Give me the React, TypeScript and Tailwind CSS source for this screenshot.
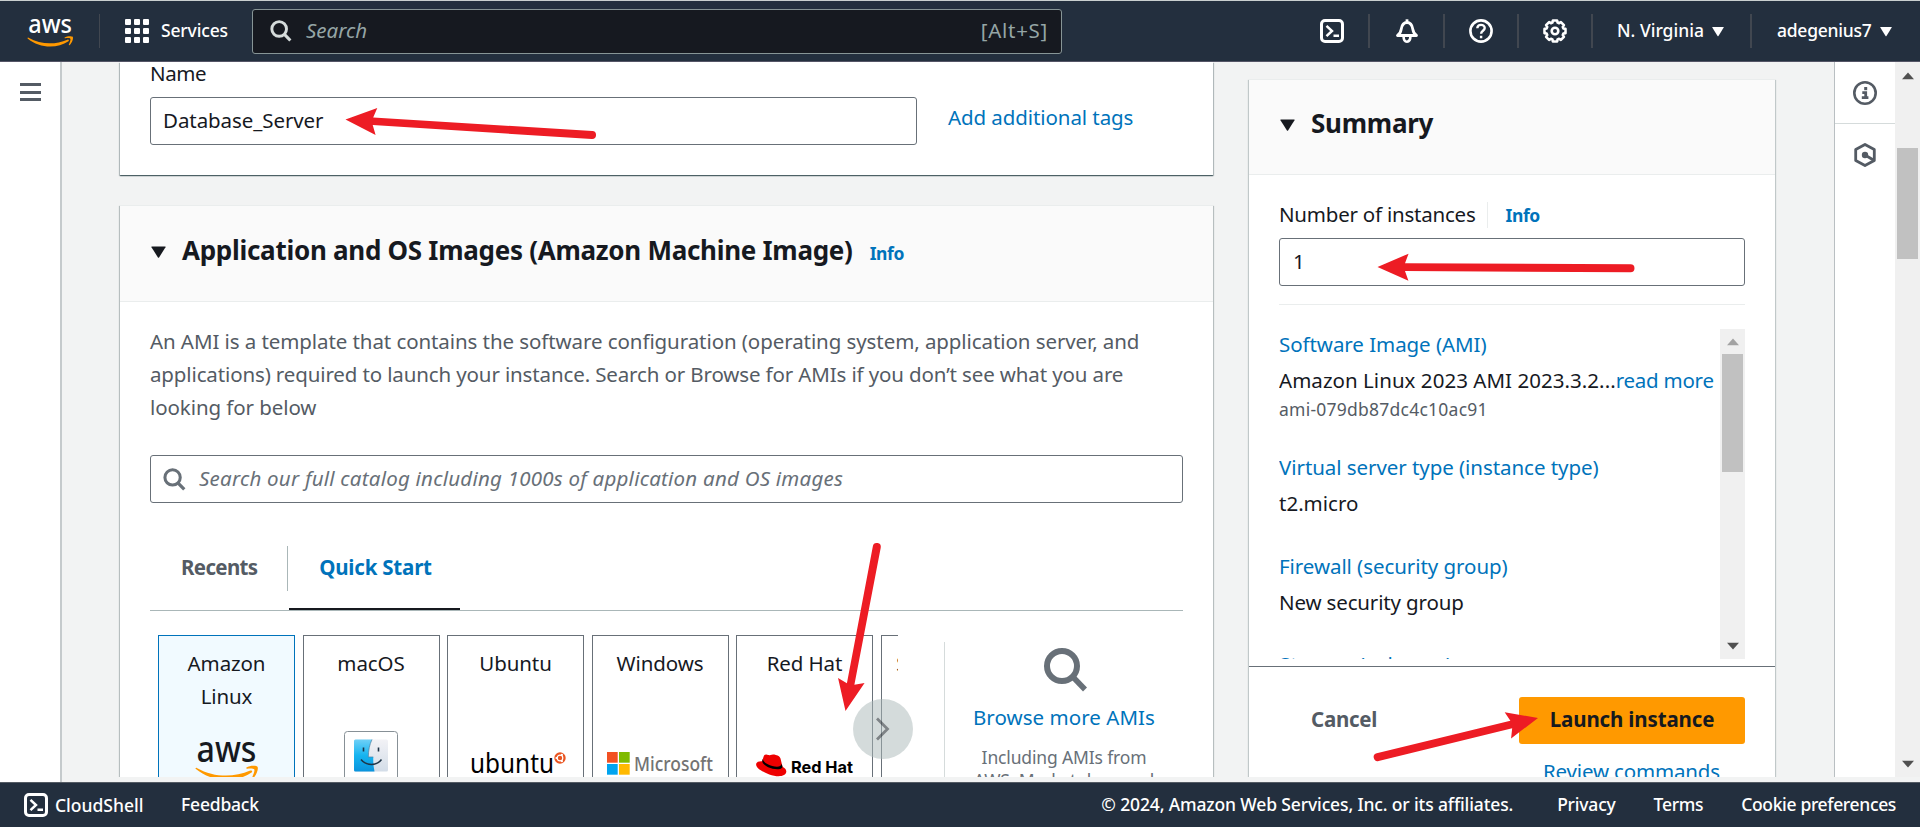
import type { ReactNode } from "react";

const gearPath = (() => {
  const pts: string[] = [];
  for (let i = 0; i < 8; i++) {
    const base = (i * Math.PI) / 4;
    const corners: [number, number][] = [
      [-0.2, 10.7],
      [0.2, 10.7],
      [0.3, 8.8],
      [0.485, 8.8],
    ];
    for (const [offset, r] of corners) {
      const a = base + offset;
      pts.push(`${(12 + r * Math.sin(a)).toFixed(2)},${(12 - r * Math.cos(a)).toFixed(2)}`);
    }
  }
  return `M${pts.join("L")}Z`;
})();

function Icon({ children, className }: { children: ReactNode; className: string }) {
  return (
    <svg viewBox="0 0 24 24" fill="none" stroke="currentColor" className={`shrink-0 ${className}`}>
      {children}
    </svg>
  );
}

function ShellIcon() {
  return (
    <Icon className="h-6 w-6 text-white">
      <rect x="1.5" y="1.5" width="21" height="21" rx="3.5" strokeWidth="3" />
      <path d="M6.500 6.800 12 12l-5.500 5.200M13.500 16.700h5.500" strokeWidth="2.500" />
    </Icon>
  );
}

function Magnifier({ className }: { className: string }) {
  return (
    <Icon className={className}>
      <circle cx="10" cy="9.8" r="8" strokeWidth="3.2" />
      <path d="m15.500 15.500 6.700 6.900" strokeWidth="3.400" />
    </Icon>
  );
}

function Caret({ className }: { className: string }) {
  return (
    <svg viewBox="0 0 16 13" className={`shrink-0 ${className}`} fill="currentColor">
      <path d="M.8.5h14.4q.8 0 .4.8L8.6 12.4q-.6.9-1.2 0L.4 1.3Q0 .5.8.5Z" />
    </svg>
  );
}

function AwsLogo({ className, color }: { className: string; color: string }) {
  return (
    <svg viewBox="0 0 64 48" className={className}>
      <text x="1.5" y="28" fontFamily="Noto Sans, sans-serif" fontSize="35.5" fontWeight="500" fill={color} textLength="60" lengthAdjust="spacingAndGlyphs">
        aws
      </text>
      <path d="M.6 34.800C.2 34.200.9 33.300 1.800 33.900 19 43.500 38 43.800 55.300 36.600c1.500-.6 2.600 1 1.300 2C41 49 17 48.500.6 34.800Z" fill="#ff9900" />
      <path d="M51.500 33.500c3-2 9-2.200 11-.8 1.300 2-1 8.600-4.200 11.300-.9.600-1.500.2-1.100-.7 1-2.500 2.900-6.600 2-8-1-1.200-4.800-.9-7-.6-.9.100-1.300-.8-.7-1.200Z" fill="#ff9900" />
    </svg>
  );
}

function NavDivider() {
  return <div className="h-[34px] w-[2px] shrink-0 bg-[#414750]" />;
}

function TopNav() {
  return (
    <header className="flex h-[62px] shrink-0 items-center border-t border-b border-t-[#c9cfcf] border-b-[#545566] bg-[#232f3e] text-white">
      <AwsLogo className="-mt-px ml-[27px] h-[35px] w-[47px]" color="#ffffff" />
      <div className="ml-[25px] h-[34px] w-px bg-[#414750]" />
      <div className="ml-[25px] grid h-6 w-6 grid-cols-3 gap-[3px]">
        {Array.from({ length: 9 }, (_, i) => (
          <span key={i} className="rounded-[1px] bg-white" />
        ))}
      </div>
      <span className="-mt-[2px] ml-[12px] w-[91px] text-[17.5px] font-medium tracking-[-0.15px]">Services</span>
      <div className="flex h-[45px] w-[810px] items-center rounded-[3px] border border-[#879596] bg-[#161920] pr-[13px] pl-[17px]">
        <Magnifier className="h-[22px] w-[22px] text-[#d5dbdb]" />
        <span className="-mt-[2px] ml-[14px] flex-1 text-[20.5px] text-[#95a5a6] italic">Search</span>
        <span className="-mt-[2px] text-[20.5px] tracking-[0.7px] text-[#95a5a6]">[Alt+S]</span>
      </div>
      <div className="ml-[258px] flex items-center">
        <ShellIcon />
        <div className="ml-6 flex items-center">
          <NavDivider />
        </div>
        <Icon className="ml-[25px] h-6 w-6">
          <path d="M12 .3v3.200" strokeWidth="2.800" />
          <path d="M2.500 16.500h19c-2.200-1.500-3.200-3.300-3.700-6.300C17.200 6.300 15.300 3.500 12 3.500s-5.200 2.800-5.800 6.700c-.5 3-1.500 4.800-3.700 6.300Z" strokeWidth="2.800" strokeLinejoin="round" />
          <path d="M8.600 17.500c0 6.900 6.800 6.900 6.800 0" strokeWidth="2.600" />
        </Icon>
        <div className="ml-6 flex items-center">
          <NavDivider />
        </div>
        <Icon className="ml-6 h-6 w-6">
          <circle cx="12" cy="12" r="10.600" strokeWidth="2.600" />
          <path d="M8.300 9.300c.1-4.600 7.400-4.500 7.400-.3 0 2.800-3.600 2.800-3.600 5.800M12.100 16.800v2.400" strokeWidth="2.400" />
        </Icon>
        <div className="ml-6 flex items-center">
          <NavDivider />
        </div>
        <Icon className="ml-6 h-6 w-6">
          <path d={gearPath} strokeWidth="2.600" strokeLinejoin="round" />
          <circle cx="12" cy="12" r="3.300" strokeWidth="2.600" />
        </Icon>
        <div className="ml-6 flex items-center">
          <NavDivider />
        </div>
        <span className="-mt-[2px] ml-6 w-[95px] text-[17.5px] font-medium whitespace-nowrap">N. Virginia</span>
        <Caret className="h-[11px] w-3" />
        <div className="ml-[26px] flex items-center">
          <NavDivider />
        </div>
        <span className="-mt-[2px] ml-[25px] w-[103px] text-[17.5px] font-medium tracking-[-0.25px] whitespace-nowrap">adegenius7</span>
        <Caret className="h-[11px] w-3" />
      </div>
    </header>
  );
}

function NameCard() {
  return (
    <section className="h-[113px] bg-white px-[30px] shadow-[0_1px_1px_rgba(0,28,36,0.5),1px_1px_1px_rgba(0,28,36,0.2),-1px_1px_1px_rgba(0,28,36,0.2)]">
      <div className="text-[20.5px] leading-[22px] tracking-[-0.4px]">Name</div>
      <div className="mt-[13px] flex">
        <div className="flex h-12 w-[767px] items-center rounded-[3px] border border-[#687078] px-3 pb-[2px] text-[20.5px] tracking-[-0.08px]">Database_Server</div>
        <a className="mt-[5px] ml-[31px] text-[20.5px] leading-[30px] tracking-[-0.08px] text-[#0073bb]">Add additional tags</a>
      </div>
    </section>
  );
}

function FinderIcon() {
  return (
    <svg viewBox="0 0 54 54" className="block h-[54px] w-[54px]">
      <defs>
        <linearGradient id="finderBlue" x1="0" y1="0" x2="0" y2="1">
          <stop offset="0" stopColor="#6fd0f7" />
          <stop offset="0.5" stopColor="#15b4f0" />
          <stop offset="1" stopColor="#0a93dc" />
        </linearGradient>
        <linearGradient id="finderGrey" x1="0" y1="0" x2="0" y2="1">
          <stop offset="0" stopColor="#f2f2f6" />
          <stop offset="1" stopColor="#d3dde8" />
        </linearGradient>
      </defs>
      <rect x="0.5" y="0.5" width="53" height="60" rx="3" fill="#ffffff" stroke="#879096" />
      <rect x="10" y="8.5" width="34" height="32" rx="1.5" fill="url(#finderGrey)" />
      <path d="M11.500 8.500H28c-2.500 5-3.600 11-3.700 17.500h5c-.2 5 .2 10 1.200 14.500h-19A1.500 1.500 0 0 1 10 39V10a1.500 1.500 0 0 1 1.500-1.500Z" fill="url(#finderBlue)" />
      <path d="M28 8.500c-2.500 5-3.600 11-3.700 17.500h5" fill="none" stroke="#4d7fa0" strokeWidth=".7" />
      <path d="M19.500 16.500v4M34.500 16.500v4" stroke="#1f3447" strokeWidth="1.6" />
      <path d="M17 28.500c5 6.500 16 6.500 20.500 0" fill="none" stroke="#1f3447" strokeWidth="1.5" />
    </svg>
  );
}

function UbuntuLogo() {
  return (
    <svg viewBox="0 0 96 34" className="block h-[34px] w-24">
      <text x="0" y="26" fontFamily="Noto Sans, sans-serif" fontSize="26.5" fill="#000" textLength="84" lengthAdjust="spacingAndGlyphs">
        ubuntu
      </text>
      <circle cx="90" cy="11" r="5.7" fill="#e95420" />
      <circle cx="90" cy="11" r="2.8" fill="none" stroke="#fff" strokeWidth="1.2" />
      <circle cx="86.5" cy="11" r="1.1" fill="#fff" />
      <circle cx="91.9" cy="7.8" r="1.1" fill="#fff" />
      <circle cx="91.9" cy="14.2" r="1.1" fill="#fff" />
    </svg>
  );
}

function MicrosoftLogo() {
  return (
    <svg viewBox="0 0 107 34" className="block h-[34px] w-[107px]">
      <path d="M0 5h10.700v10.700H0z" fill="#f25022" />
      <path d="M12 5h10.700v10.700H12z" fill="#7fba00" />
      <path d="M0 17h10.700v10.700H0z" fill="#00a4ef" />
      <path d="M12 17h10.700v10.700H12z" fill="#ffb900" />
      <text x="27" y="23.500" fontFamily="Noto Sans, sans-serif" fontSize="19" fontWeight="500" fill="#737373" textLength="79" lengthAdjust="spacingAndGlyphs">
        Microsoft
      </text>
    </svg>
  );
}

function RedHatLogo() {
  return (
    <svg viewBox="0 0 98 34" className="block h-[34px] w-[98px]">
      <path d="M7.300 10.500c.8-2.500 1.500-3 3-2.900 2 .3 2.600 1 4.200.5 1.500-.8 3-.8 5.300-.2 2.800.8 4 1.400 4.700 3.600l2 8.300c2.300 1.200 4 3 3.800 5-.5 5-9 5.600-17 2.600C5.500 24.300-.6 20.500.2 16.700c.5-2 3-2.700 6-2.500Z" fill="#ee0000" />
      <path d="M6.200 14c.2 5.500 13 9.800 18.500 7.700 1.600-.6 2-1.400 1.600-2.700l-.7-2.300c-.3 3.300-4.500 3.600-9.300 2.300C11 17.500 7 14.800 6.800 11.700Z" fill="#000" />
      <text x="35" y="26" fontFamily="Inter, sans-serif" fontSize="16.5" fontWeight="700" fill="#000" textLength="62" lengthAdjust="spacingAndGlyphs">
        Red Hat
      </text>
    </svg>
  );
}

function Tile({ label, selected, logo, pad }: { label: string; selected?: boolean; logo?: ReactNode; pad?: string }) {
  return (
    <div className={`flex h-[200px] w-[137px] shrink-0 flex-col items-center border pt-[11px] ${selected ? "border-[#0073bb] bg-[#f1faff]" : "border-[#687078] bg-white"}`}>
      <span className="flex h-[66px] w-[107px] justify-center text-center text-[20.5px] leading-[33px] tracking-[-0.1px]">{label}</span>
      <div className={pad}>{logo}</div>
    </div>
  );
}

function ImagesCard() {
  return (
    <section className="mt-[30px] h-[700px] bg-white shadow-[0_1px_1px_rgba(0,28,36,0.3),1px_1px_1px_rgba(0,28,36,0.2),-1px_1px_1px_rgba(0,28,36,0.2)]">
      <div className="flex h-[97px] items-center border-t border-b border-[#eaeded] bg-[#fafafa] px-[31px] pb-[7px]">
        <Caret className="mt-[3px] h-3 w-[15px]" />
        <h2 className="ml-[16px] text-[26px] font-bold tracking-[-0.28px]">Application and OS Images (Amazon Machine Image)</h2>
        <a className="mt-[7px] ml-[17px] text-[17.5px] font-bold tracking-[-0.4px] text-[#0073bb]">Info</a>
      </div>
      <div className="px-[30px] pt-[23px]">
        <p className="text-[20.5px] leading-[33px] tracking-[-0.08px] whitespace-nowrap text-[#545b64]">
          An AMI is a template that contains the software configuration (operating system, application server, and
          <br />
          <span className="tracking-[-0.13px]">applications) required to launch your instance. Search or Browse for AMIs if you don’t see what you are</span>
          <br />
          looking for below
        </p>
        <div className="mt-[31px] flex h-12 items-center rounded-[3px] border border-[#687078] pl-[12px] text-[#687078]">
          <Magnifier className="h-[23px] w-[23px]" />
          <span className="-mt-[2px] ml-[13px] text-[20.5px] tracking-[0.23px] italic">Search our full catalog including 1000s of application and OS images</span>
        </div>
        <div className="mt-[43px] flex h-[65px] items-start border-b border-[#aab7b8] text-[20.5px] font-bold">
          <div className="flex h-[45px] w-[138px] items-center border-r border-[#aab7b8] pl-[31px] tracking-[-0.65px] text-[#545b64]">
            <span className="-mt-[2px]">Recents</span>
          </div>
          <div className="ml-px flex h-16 w-[171px] justify-center border-b-2 border-[#16191f] text-[#0073bb]">
            <span className="ml-[2px] leading-[43px] tracking-[-0.2px]">Quick Start</span>
          </div>
        </div>
        <div className="relative flex pl-2">
          <div className="flex w-[740px] gap-[7.5px] overflow-hidden pt-6">
            <Tile label="Amazon Linux" selected logo={<AwsLogo className="h-12 w-16" color="#16191f" />} pad="mt-[21px]" />
            <Tile label="macOS" logo={<FinderIcon />} pad="mt-[18px]" />
            <Tile label="Ubuntu" logo={<UbuntuLogo />} pad="mt-[34px] ml-1" />
            <Tile label="Windows" logo={<MicrosoftLogo />} pad="mt-[34px]" />
            <Tile label="Red Hat" logo={<RedHatLogo />} pad="mt-[34px]" />
            <Tile label="SUSE Linux" />
          </div>
          <div className="mt-[31px] ml-[46px] flex h-[200px] flex-1 flex-col items-center border-l border-[#d5dbdb] pt-[5px]">
            <svg viewBox="0 0 46 46" className="ml-[3px] h-[46px] w-[46px]" fill="none" stroke="#687078">
              <circle cx="19" cy="19" r="15" strokeWidth="6" />
              <path d="m29 29 13 13.500" strokeWidth="5.5" />
            </svg>
            <a className="mt-[8px] text-[20.5px] leading-[33px] tracking-[0.05px] text-[#0073bb]">Browse more AMIs</a>
            <p className="mt-[12px] text-center text-[17.5px] leading-[23px] tracking-[-0.15px] text-[#687078]">
              Including AMIs from
              <br />
              AWS, Marketplace and
            </p>
          </div>
          <button className="absolute top-[88px] left-[703px] flex h-[60px] w-[60px] items-center justify-center rounded-full bg-[#aab7b8]/50 text-[#16191f]/45">
            <svg viewBox="0 0 14 24" className="h-6 w-[14px]" fill="none" stroke="currentColor">
              <path d="m1 1.500 10.500 10.500L1 22.500" strokeWidth="2.800" />
            </svg>
          </button>
        </div>
      </div>
    </section>
  );
}

function SummaryItem({ title, children }: { title: string; children?: ReactNode }) {
  return (
    <div>
      <div className="leading-[30px] tracking-[-0.06px] text-[#0073bb]">{title}</div>
      <div className="mt-[6px] leading-[30px] whitespace-nowrap">{children}</div>
    </div>
  );
}

function SummaryPanel() {
  return (
    <aside className="mt-[17px] ml-9 h-[760px] w-[526px] shrink-0 bg-white shadow-[1px_1px_1px_rgba(0,28,36,0.2),-1px_1px_1px_rgba(0,28,36,0.2)]">
      <div className="flex h-24 items-center border-t border-b border-[#eaeded] bg-[#fafafa] pb-[8px] pl-[31px]">
        <Caret className="mt-[3px] h-3 w-[15px]" />
        <h2 className="ml-[16px] text-[26px] font-bold tracking-[-0.25px]">Summary</h2>
      </div>
      <div className="h-[492px] border-b border-[#687078] px-[30px] pt-[26px]">
        <div className="flex h-[28px] items-center">
          <span className="-mt-[2px] text-[20.5px] tracking-[-0.22px]">Number of instances</span>
          <span className="ml-[11px] h-[26px] border-l border-[#eaeded]" />
          <a className="mt-px ml-[18px] text-[17.5px] font-bold tracking-[-0.4px] text-[#0073bb]">Info</a>
        </div>
        <div className="mt-[9px] flex h-12 items-center rounded-[3px] border border-[#687078] px-[13px] pb-[2px] text-[20.5px]">1</div>
        <div className="mt-[18px] border-t border-[#eaeded]" />
        <div className="mt-6 flex h-[330px]">
          <div className="flex w-[441px] flex-col overflow-hidden text-[20.5px]">
            <SummaryItem title="Software Image (AMI)">
              <span className="tracking-[0.04px]">Amazon Linux 2023 AMI 2023.3.2...</span>
              <span className="tracking-[-0.25px] text-[#0073bb]">read more</span>
              <div className="pt-[2px] text-[17.5px] leading-[25px] tracking-[0.24px] text-[#545b64]">ami-079db87dc4c10ac91</div>
            </SummaryItem>
            <div className="mt-[30px]">
              <SummaryItem title="Virtual server type (instance type)">t2.micro</SummaryItem>
            </div>
            <div className="mt-[33px]">
              <SummaryItem title="Firewall (security group)">
                <span className="tracking-[-0.15px]">New security group</span>
              </SummaryItem>
            </div>
            <div className="mt-8">
              <SummaryItem title="Storage (volumes)" />
            </div>
          </div>
          <div className="flex w-[25px] flex-col items-center bg-[#f0f0f0] py-[9px]">
            <ScrollArrow className="text-[#a3a3a3]" />
            <div className="mt-[8px] h-[118px] w-[21px] bg-[#c1c1c1]" />
            <ScrollArrow className="mt-auto rotate-180 text-[#505050]" />
          </div>
        </div>
      </div>
      <div className="flex items-center justify-between pt-[30px] pr-[30px] pl-[62px] text-[20.5px] font-bold">
        <span className="-mt-[2px] tracking-[-0.25px] text-[#545b64]">Cancel</span>
        <button className="h-[47px] w-[226px] rounded-[3px] bg-[#ff9900] pb-[2px] tracking-[-0.15px] text-[#16191f]">Launch instance</button>
      </div>
      <div className="mt-[12px] pr-[55px] text-right text-[20.5px] leading-[30px] tracking-[-0.15px] text-[#0073bb]">Review commands</div>
    </aside>
  );
}

function ScrollArrow({ className }: { className: string }) {
  return (
    <svg viewBox="0 0 12 8" className={`h-2 w-3 ${className}`} fill="currentColor">
      <path d="M6 .5 12 7.200H0Z" />
    </svg>
  );
}

function RightRail() {
  return (
    <div className="flex w-[61px] shrink-0 flex-col items-center border-l border-[#b9bfc2] bg-white text-[#545b64]">
      <div className="flex h-[62px] w-full items-center justify-center border-b border-[#d5dbdb]">
        <Icon className="h-6 w-6">
          <circle cx="12" cy="12" r="10.7" strokeWidth="2.6" />
          <path d="M12.700 6v3.200" strokeWidth="3" />
          <path d="M9.300 11.600h3.400v4.500M8.800 16.600h6.600" strokeWidth="2.8" />
        </Icon>
      </div>
      <Icon className="mt-[19px] h-6 w-6">
        <path d="M12 1.500 21.300 6.600v10.800L12 22.500 2.700 17.400V6.600Z" strokeWidth="2.8" strokeLinejoin="round" />
        <circle cx="12" cy="12" r="3.200" fill="currentColor" stroke="none" />
        <path d="m12 12 8 4.800" strokeWidth="2.8" />
      </Icon>
    </div>
  );
}

function Arrow({ x, y, angle, length }: { x: number; y: number; angle: number; length: number }) {
  return (
    <g transform={`translate(${x} ${y}) rotate(${angle})`} fill="#ed1c24">
      <path d={`M0 0 31-13.500 27.500-3.800 ${length - 4}-4a4 4 0 0 1 0 8L27.500 3.800 31 13.500Z`} />
    </g>
  );
}

function Footer() {
  return (
    <footer className="flex h-[45px] shrink-0 items-center border-t border-[#545b64] bg-[#232f3e] px-6 text-[17.5px] font-medium text-white">
      <ShellIcon />
      <span className="ml-[7px] w-[126px]">CloudShell</span>
      <span className="-mt-px tracking-[-0.2px]">Feedback</span>
      <span className="-mt-px ml-auto tracking-[-0.14px]">© 2024, Amazon Web Services, Inc. or its affiliates.</span>
      <span className="-mt-px ml-[44px] tracking-[-0.2px]">Privacy</span>
      <span className="-mt-px ml-[38px] tracking-[-0.3px]">Terms</span>
      <span className="-mt-px ml-[38px] tracking-[-0.35px]">Cookie preferences</span>
    </footer>
  );
}

export default function App() {
  return (
    <div className="relative flex h-[827px] w-[1920px] flex-col overflow-hidden bg-[#f2f3f3] font-['Noto_Sans',sans-serif] text-[#16191f]">
      <TopNav />
      <div className="flex h-[720px] shrink-0">
        <nav className="w-[62px] shrink-0 border-r-2 border-[#c5cacc] bg-white pt-[21px] pl-[19.5px]">
          <div className="flex w-[21px] flex-col gap-[4.5px]">
            <span className="h-[3px] bg-[#545b64]" />
            <span className="h-[3px] bg-[#545b64]" />
            <span className="h-[3px] bg-[#545b64]" />
          </div>
        </nav>
        <main className="flex h-[715px] flex-1 overflow-hidden pl-[58px]">
          <div className="w-[1093px] shrink-0">
            <NameCard />
            <ImagesCard />
          </div>
          <SummaryPanel />
          <div className="flex-1" />
          <RightRail />
          <div className="flex w-[25px] shrink-0 flex-col items-center bg-[#f0f0f0] pt-[10px] pb-[9px]">
            <ScrollArrow className="text-[#505050]" />
            <div className="mt-[68px] h-[111px] w-[21px] bg-[#c1c1c1]" />
            <ScrollArrow className="mt-auto rotate-180 text-[#505050]" />
          </div>
        </main>
      </div>
      <Footer />
      <svg viewBox="0 0 1920 827" className="pointer-events-none absolute inset-0 h-full w-full">
        <Arrow x={345.5} y={119.5} angle={3.6} length={251} />
        <Arrow x={1377.5} y={267} angle={0.3} length={257} />
        <Arrow x={845.5} y={711} angle={-79.2} length={171} />
        <Arrow x={1538} y={718} angle={166.3} length={169} />
      </svg>
    </div>
  );
}
